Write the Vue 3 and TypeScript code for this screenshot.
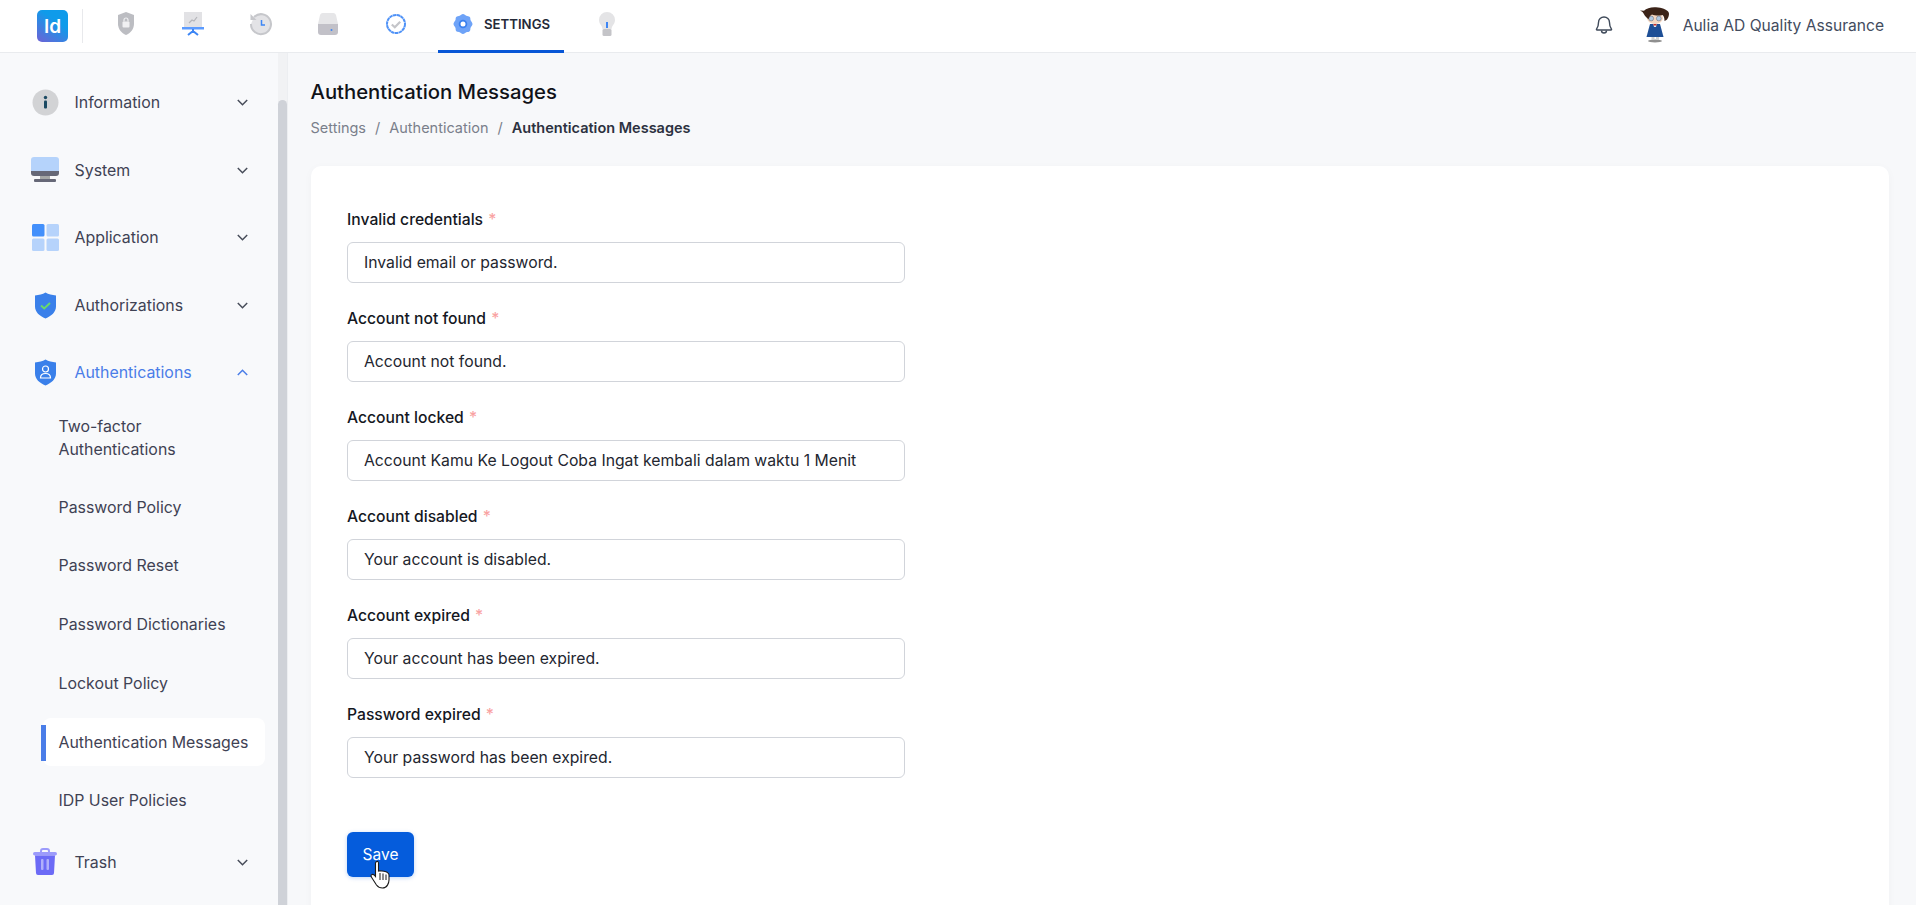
<script setup lang="ts">
type SideItem = { key: string; label: string };

const sideItems: SideItem[] = [
  { key: "info", label: "Information" },
  { key: "system", label: "System" },
  { key: "app", label: "Application" },
  { key: "authz", label: "Authorizations" },
];

const subItems = [
  "Two-factor Authentications",
  "Password Policy",
  "Password Reset",
  "Password Dictionaries",
  "Lockout Policy",
  "Authentication Messages",
  "IDP User Policies",
];

const fields = [
  { label: "Invalid credentials", value: "Invalid email or password." },
  { label: "Account not found", value: "Account not found." },
  { label: "Account locked", value: "Account Kamu Ke Logout Coba Ingat kembali dalam waktu 1 Menit" },
  { label: "Account disabled", value: "Your account is disabled." },
  { label: "Account expired", value: "Your account has been expired." },
  { label: "Password expired", value: "Your password has been expired." },
];
</script>

<template>
  <div class="page">
    <header class="topbar">
      <div class="logo">Id</div>
      <div class="divider"></div>
      <nav class="tabs">
        <a class="tab">
          <svg width="22" height="26" viewBox="0 0 22 26">
            <path d="M11 1 19 4v9c0 5-3.5 9-8 11-4.500-2-8-6-8-11V4z" fill="#bcbdc2" />
            <rect x="7.5" y="10.5" width="7" height="6" rx="1" fill="#f0f0f2" />
            <path d="M9 10.5V9a2 2 0 0 1 4 0v1.5" fill="none" stroke="#f0f0f2" stroke-width="1.2" />
          </svg>
        </a>
        <a class="tab">
          <svg width="24" height="26" viewBox="0 0 24 26">
            <rect x="3" y="1" width="18" height="15" fill="#e2e2e5" />
            <path d="M8 12l3-3 2 1 3-4" fill="none" stroke="#b4b5ba" stroke-width="1.2" />
            <rect x="1" y="16" width="22" height="2.500" fill="#5b9bff" />
            <path d="M12 18v4M12 20l-5 4M12 20l5 4" fill="none" stroke="#3d86f5" stroke-width="2" />
          </svg>
        </a>
        <a class="tab">
          <svg width="24" height="24" viewBox="0 0 24 24">
            <path d="M5 5a10 10 0 1 1-3 7" fill="#e3e3e6" stroke="#c6c7cb" stroke-width="2" />
            <path d="M1.5 2v6h6z" fill="#c6c7cb" />
            <path d="M12.5 8v5h3.5" fill="none" stroke="#3d86f5" stroke-width="1.5" />
          </svg>
        </a>
        <a class="tab">
          <svg width="22" height="24" viewBox="0 0 22 24">
            <path d="M1 12 3 3a3 3 0 0 1 3-2h10a3 3 0 0 1 3 2l2 9z" fill="#e6e6e8" />
            <path d="M1 12h20v8a3 3 0 0 1-3 3H4a3 3 0 0 1-3-3z" fill="#c2c1c8" />
            <circle cx="14.500" cy="18" r="1" fill="#3d86f5" />
          </svg>
        </a>
        <a class="tab">
          <svg width="22" height="22" viewBox="0 0 22 22">
            <circle cx="11" cy="11" r="9" fill="#fff" stroke="#4f92f7" stroke-width="2" stroke-dasharray="3.500 .4" />
            <path d="M6.800 11.500l3 2.800 5.400-5.600" fill="none" stroke="#c4c5c9" stroke-width="2.2" />
          </svg>
        </a>
        <a class="tab active">
          <svg width="22" height="22" viewBox="0 0 22 22">
            <path d="M11 1c1.500 0 2.200 1.200 3.300 1.700s2.600.1 3.500 1.300.4 2.200.8 3.200S20.500 9.500 20.500 11s-1.400 2.600-1.900 3.700.1 2.100-.8 3.300-2.400.8-3.500 1.300-1.800 1.700-3.300 1.700-2.200-1.200-3.300-1.700-2.600-.1-3.500-1.300-.3-2.200-.8-3.300S1.500 12.500 1.500 11s1.400-2.700 1.900-3.800-.1-2.100.8-3.200 2.400-.8 3.500-1.300S9.500 1 11 1z" fill="#6ea3f8" />
            <circle cx="11" cy="11" r="3.400" fill="#fff" stroke="#3a80ee" stroke-width="1.800" />
          </svg>
          <span>SETTINGS</span>
        </a>
        <a class="tab">
          <svg width="18" height="26" viewBox="0 0 18 26">
            <path d="M9 1a8 8 0 0 1 8 8c0 3-1.600 4.500-2.800 6.500-.5 1-.7 2-.7 3h-9c0-1-.2-2-.7-3C2.600 13.500 1 12 1 9a8 8 0 0 1 8-8z" fill="#e4e4e6" />
            <rect x="4.500" y="18" width="9" height="7" rx="1.500" fill="#c4c4c8" />
            <rect x="8" y="11" width="2" height="6" fill="#3d86f5" />
          </svg>
        </a>
      </nav>
      <div class="top-right">
        <svg class="bell" width="20" height="20" viewBox="0 0 20 20">
          <path d="M10 2a5.500 5.500 0 0 1 5.500 5.500c0 4 1.200 5.500 2 6.700.2.400 0 .8-.5.800H3c-.5 0-.7-.4-.5-.8.800-1.200 2-2.700 2-6.700A5.500 5.500 0 0 1 10 2z" fill="none" stroke="#3f4a5a" stroke-width="1.400" />
          <path d="M7.500 15.500a2.500 2.500 0 0 0 5 0" fill="none" stroke="#3f4a5a" stroke-width="1.400" />
        </svg>
        <svg class="avatar" width="30" height="36" viewBox="0 0 30 36">
          <ellipse cx="15" cy="34" rx="7" ry="1.500" fill="#8f8f8f" />
          <path d="M11.500 33h3v-4h-3zM16 33h3v-4h-3z" fill="#d2d2d2" />
          <path d="M10 17h10l3.500 13h-17z" fill="#1e4f96" />
          <path d="M13 16h4l-1 4h-2z" fill="#e9e6e6" />
          <rect x="13.500" y="17" width="3" height="1.500" fill="#c8322c" />
          <ellipse cx="15" cy="11" rx="8" ry="6" fill="#f3d6c0" />
          <circle cx="11.200" cy="11.500" r="2.400" fill="#b3cbe4" stroke="#5a6170" stroke-width=".5" />
          <circle cx="18.800" cy="11.500" r="2.400" fill="#b3cbe4" stroke="#5a6170" stroke-width=".5" />
          <path transform="scale(1 .85)" d="M0 4l4 .3C6.500 1.500 11 0 16 .4c6 .5 10.500 2.500 12.500 5.500 1 2 .5 5-1 8-.5 1-1.500 2-3 2.500 0-3-.5-5.500-2-7-3 1-7.500 1-10.500-.5-1.500 1-3 3-3.500 5.500C7 13 5 11 4 8.500 3.500 6.500 2 5 0 4z" fill="#3b2318" />
        </svg>
        <span class="user-name">Aulia AD Quality Assurance</span>
      </div>
    </header>

    <div class="body">
      <aside class="sidebar">
        <div class="side-list">
          <div v-for="item in sideItems" :key="item.key" class="side-item">
            <span class="side-icon">
              <svg v-if="item.key === 'info'" width="27" height="27" viewBox="0 0 27 27">
                <circle cx="13.500" cy="13.500" r="13" fill="#d2d3d5" />
                <circle cx="13.500" cy="8.500" r="1.700" fill="#1b4a63" />
                <rect x="12" y="11.500" width="3" height="8" rx="1" fill="#1b4a63" />
              </svg>
              <svg v-else-if="item.key === 'system'" width="28" height="28" viewBox="0 0 28 28">
                <path d="M0 15V4a3 3 0 0 1 3-3h22a3 3 0 0 1 3 3v11z" fill="#b5d3fb" />
                <path d="M0 15h28v2a3 3 0 0 1-3 3H3a3 3 0 0 1-3-3z" fill="#666877" />
                <rect x="9" y="20" width="10" height="3" fill="#a5a7a6" />
                <rect x="3" y="23" width="22" height="3" rx="1" fill="#666877" />
              </svg>
              <svg v-else-if="item.key === 'app'" width="27" height="27" viewBox="0 0 27 27">
                <rect x="0" y="0" width="12.500" height="12.500" rx="1.500" fill="#4390fb" />
                <rect x="14.500" y="0" width="12.500" height="12.500" rx="1.500" fill="#b6d3fb" />
                <rect x="0" y="14.500" width="12.500" height="12.500" rx="1.500" fill="#b6d3fb" />
                <rect x="14.500" y="14.500" width="12.500" height="12.500" rx="1.500" fill="#b6d3fb" />
              </svg>
              <svg v-else width="23" height="27" viewBox="0 0 23 27">
                <path d="M11.500 .5c3 2 6.500 2.500 10.500 3v11c0 5.500-4.500 9.500-10.500 12C5.500 24 1 20 1 14.500v-11c4-.5 7.500-1 10.500-3z" fill="#3a80ea" />
                <path d="M7 13.500l3.200 3 5.800-5.500" fill="none" stroke="#69d96a" stroke-width="2" />
              </svg>
            </span>
            <span class="side-label">{{ item.label }}</span>
            <svg class="chev" width="11" height="7" viewBox="0 0 11 7">
              <path d="M.8 1l4.700 4.700L10.200 1" fill="none" stroke="#474c59" stroke-width="1.500" />
            </svg>
          </div>

          <div class="side-item open">
            <span class="side-icon">
              <svg width="23" height="27" viewBox="0 0 23 27">
                <path d="M11.500 .5c3 2 6.500 2.500 10.500 3v11c0 5.500-4.500 9.500-10.500 12C5.500 24 1 20 1 14.500v-11c4-.5 7.500-1 10.500-3z" fill="#3a80ea" />
                <circle cx="11.500" cy="10" r="3" fill="none" stroke="#fff" stroke-width="1.200" />
                <path d="M6.500 19c0-3 2-4.500 5-4.500s5 1.500 5 4.500z" fill="none" stroke="#fff" stroke-width="1.200" />
              </svg>
            </span>
            <span class="side-label">Authentications</span>
            <svg class="chev" width="11" height="7" viewBox="0 0 11 7">
              <path d="M.8 6l4.700-4.700L10.200 6" fill="none" stroke="#4a7de8" stroke-width="1.500" />
            </svg>
          </div>

          <ul class="sub-list">
            <li v-for="sub in subItems" :key="sub" class="sub-item" :class="{ current: sub === 'Authentication Messages', wrap: sub.startsWith('Two') }">
              {{ sub }}
            </li>
          </ul>

          <div class="side-item trash">
            <span class="side-icon">
              <svg width="24" height="28" viewBox="0 0 24 28">
                <path d="M8 4V3a2 2 0 0 1 2-2h4a2 2 0 0 1 2 2v1" fill="none" stroke="#9c9bfb" stroke-width="2" />
                <rect x="0" y="4" width="24" height="3.500" rx="1.700" fill="#9c9bfb" />
                <path d="M2 7.500h20L21 25a2 2 0 0 1-2 2H5a2 2 0 0 1-2-2z" fill="#6c6bf6" />
                <rect x="8" y="11" width="2.500" height="11" rx="1" fill="#b1b0fb" />
                <rect x="13.500" y="11" width="2.500" height="11" rx="1" fill="#b1b0fb" />
              </svg>
            </span>
            <span class="side-label">Trash</span>
            <svg class="chev" width="11" height="7" viewBox="0 0 11 7">
              <path d="M.8 1l4.700 4.700L10.200 1" fill="none" stroke="#474c59" stroke-width="1.500" />
            </svg>
          </div>
        </div>
        <div class="scrollbar"><div class="thumb"></div></div>
      </aside>

      <main class="content">
        <h1>Authentication Messages</h1>
        <div class="crumbs">
          <span>Settings</span>
          <span>/</span>
          <span>Authentication</span>
          <span>/</span>
          <b>Authentication Messages</b>
        </div>
        <section class="card">
          <div v-for="f in fields" :key="f.label" class="field">
            <label>{{ f.label }} <i>*</i></label>
            <input type="text" :value="f.value" />
          </div>
          <div class="btn-wrap">
            <button class="save">Save</button>
            <svg class="cursor" width="24" height="30" viewBox="0 0 24 30">
              <path d="M6 2c1-1.200 2.500-.6 2.500 1v8l1.500-.2 2 .2 2 .3 2 .5 1.500.8c1 .6 1.500 1.400 1.500 2.500v5c0 2-.6 3.500-1.500 5-1 1.600-2.500 2.900-5 2.900-3 0-4.500-1-6-3L2 18c-1-1.300-1.300-2.500-.6-3.200.7-.7 2-.6 3 .4l1.100 1.300V3z" fill="#fff" stroke="#1a1a1a" stroke-width="1.100" />
              <path d="M10 13v7M13 13.500V20M16 14.500V20" fill="none" stroke="#1a1a1a" stroke-width="1" />
            </svg>
          </div>
        </section>
      </main>
    </div>
  </div>
</template>

<style scoped>
.page {
  height: 905px;
  overflow: hidden;
  background: #f7f8fa;
  font-family: Inter, "Liberation Sans", sans-serif;
  color: #3f4254;
}

.topbar {
  height: 52px;
  background: #fff;
  border-bottom: 1px solid #e9ebee;
  display: flex;
  align-items: center;
  padding: 0 32px 0 37px;
  box-sizing: content-box;
}

.logo {
  width: 31px;
  height: 32px;
  border-radius: 5px;
  background: linear-gradient(215deg, #0f9bea 35%, #6e62d6 100%);
  color: #fff;
  font-weight: 600;
  font-size: 19px;
  display: flex;
  align-items: center;
  justify-content: center;
}

.divider {
  width: 1px;
  height: 34px;
  margin-left: 14px;
  background: #e8e9ec;
}

.tabs {
  display: flex;
  align-items: stretch;
  gap: 17.5px;
  height: 53px;
  margin: 0 0 -1px 17.5px;
}

.tab {
  min-width: 50px;
  display: flex;
  align-items: center;
  justify-content: center;
  gap: 10px;
  box-sizing: border-box;
  border-bottom: 3px solid transparent;
  padding-bottom: 2px;
}

.tab.active {
  padding: 0 14px 2px;
  border-bottom-color: #0756d6;
}

.tab span {
  font-size: 13.2px;
  font-weight: 600;
  color: #252a38;
}

.top-right {
  margin-left: auto;
  display: flex;
  align-items: center;
  margin-top: -2px;
}

.bell {
  margin-right: 26px;
}

.avatar {
  margin-right: 13px;
}

.user-name {
  font-size: 15.6px;
  color: #434c5e;
}

.body {
  display: flex;
  height: 852px;
}

.sidebar {
  width: 287px;
  display: flex;
  flex: none;
  background: #f8f9fb;
  border-right: 1px solid #eceef1;
}

.side-list {
  width: 278px;
  padding-top: 22.5px;
  box-sizing: border-box;
}

.side-item {
  height: 54px;
  margin-bottom: 13.5px;
  display: flex;
  align-items: center;
  padding: 0 30.5px 0 30px;
}

.side-item.open {
  margin-bottom: 0;
}

.side-item.trash {
  margin-top: 3px;
}

.side-icon {
  width: 30px;
  display: flex;
  justify-content: center;
  flex: none;
}

.side-label {
  margin-left: 14.5px;
  flex: 1;
  font-size: 15.9px;
  font-weight: 430;
}

.open .side-label {
  color: #4a7de8;
}

.chev {
  flex: none;
}

.sub-list {
  list-style: none;
  margin: 0;
  padding: 0;
}

.sub-item {
  position: relative;
  height: 48.5px;
  margin: 0 13px 10.2px 43px;
  padding-left: 15.5px;
  display: flex;
  align-items: center;
  font-size: 15.9px;
  font-weight: 430;
  border-radius: 8px;
}

.sub-item.wrap {
  height: 54px;
  line-height: 23px;
  padding-right: 40px;
  margin-top: 11.5px;
  margin-bottom: 18px;
}

.sub-item.current {
  background: #fff;
}

.sub-item.current::before {
  content: "";
  position: absolute;
  left: -2px;
  top: 7px;
  width: 5px;
  height: 36px;
  background: #4a7de8;
}

.scrollbar {
  width: 9px;
  background: #f1f2f4;
  padding-top: 47px;
}

.thumb {
  height: 100%;
  background: #cfd2d8;
  border-radius: 5px 5px 0 0;
}

.content {
  flex: 1;
  padding: 25px 27px 0 22.5px;
  min-width: 0;
}

h1 {
  margin: 0;
  font-size: 20.3px;
  line-height: 28px;
  font-weight: 500;
  color: #101218;
}

.crumbs {
  margin-top: 10px;
  display: flex;
  gap: 9px;
  font-size: 14.5px;
  line-height: 24px;
  color: #7a7f8b;
}

.crumbs b {
  font-weight: 600;
  color: #2c3140;
}

.card {
  margin-top: 26px;
  height: 760px;
  padding: 41px 36.5px 0;
  box-sizing: border-box;
  background: #fff;
  border-radius: 10px;
  box-shadow: 0 2px 10px rgba(40, 50, 70, 0.03);
}

.field {
  width: 558px;
  height: 99px;
}

label {
  display: block;
  font-size: 15.7px;
  font-weight: 480;
  line-height: 26px;
  color: #15181f;
  margin-bottom: 9px;
}

label i {
  font-style: normal;
  color: #f9a3a3;
  margin-left: 1px;
}

input {
  display: block;
  width: 100%;
  height: 41px;
  box-sizing: border-box;
  border: 1px solid #d1d4da;
  border-radius: 6px;
  padding: 0 16px;
  font: 15.75px Inter, "Liberation Sans", sans-serif;
  color: #23262f;
  background: #fff;
  outline: none;
}

.btn-wrap {
  position: relative;
  margin-top: 31px;
  width: 67px;
}

.save {
  width: 67px;
  height: 45px;
  border: none;
  border-radius: 6px;
  background: #055cdc;
  color: #fff;
  font: 400 15.5px Inter, "Liberation Sans", sans-serif;
  box-shadow: 0 1px 4px rgba(5, 92, 220, 0.25);
}

.cursor {
  position: absolute;
  left: 23px;
  top: 28px;
}
</style>

<style>
html, body {
  margin: 0;
  overflow: hidden;
}
</style>
